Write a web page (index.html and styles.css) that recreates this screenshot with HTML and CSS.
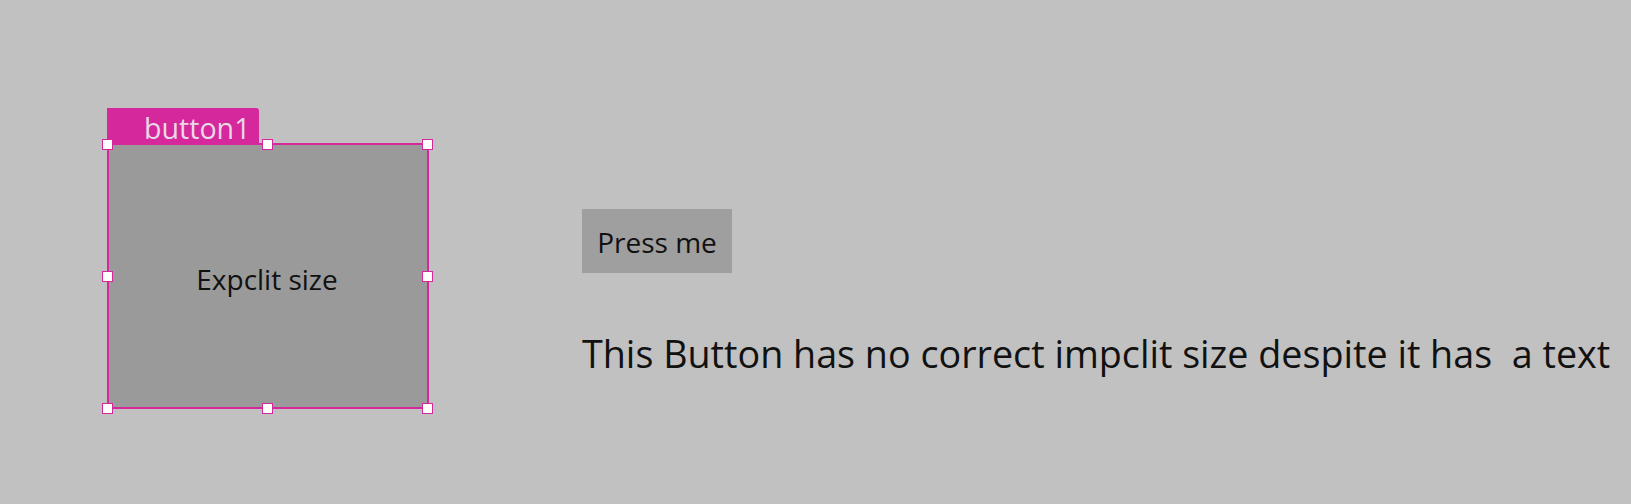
FILE: index.html
```html
<!DOCTYPE html>
<html>
<head>
<meta charset="utf-8">
<link rel="stylesheet" href="styles.css">
</head>
<body>
<div class="canvas">
  <div class="designer">
    <div class="tab"><span class="tab-label">button1</span></div>
    <div class="frame">
      <span class="frame-label">Expclit size</span>
      <span class="handle h-tl"></span>
      <span class="handle h-tm"></span>
      <span class="handle h-tr"></span>
      <span class="handle h-ml"></span>
      <span class="handle h-mr"></span>
      <span class="handle h-bl"></span>
      <span class="handle h-bm"></span>
      <span class="handle h-br"></span>
    </div>
  </div>
  <div class="stack">
    <div class="press">Press me</div>
    <div class="note">This Button has no correct impclit size despite it has&nbsp; a text</div>
  </div>
</div>
</body>
</html>
```

FILE: styles.css
```css
html, body {
  margin: 0;
  padding: 0;
  background: #c1c1c1;
  width: 1631px;
  height: 504px;
  overflow: hidden;
  font-family: "Open Sans", "Noto Sans", sans-serif;
}

.canvas {
  display: flex;
  align-items: flex-start;
  padding: 108px 0 0 107px;
}

.designer {
  width: 322px;
  display: flex;
  flex-direction: column;
}

.tab {
  width: 152px;
  height: 35px;
  box-sizing: border-box;
  background: #d5289c;
  border-radius: 0 3px 0 0;
  color: #ead8e6;
  display: flex;
  align-items: center;
  padding-left: 37px;
}

.tab-label {
  font-size: 28.6px;
  line-height: 1;
  padding-top: 5px;
  white-space: nowrap;
}

.frame {
  position: relative;
  width: 322px;
  height: 266px;
  box-sizing: border-box;
  border: 2px solid #d5289c;
  background: #9a9a9a;
  display: flex;
  align-items: center;
  justify-content: center;
}

.frame-label {
  font-size: 28px;
  color: #111;
  padding-top: 6px;
  padding-right: 2px;
}

.handle {
  position: absolute;
  width: 11px;
  height: 11px;
  box-sizing: border-box;
  background: #fff;
  border: 1px solid #d5289c;
}
.h-tl { left: -7px; top: -6px; }
.h-tm { left: calc(50% - 6px); top: -6px; }
.h-tr { right: -6px; top: -6px; }
.h-ml { left: -7px; top: calc(50% - 5px); }
.h-mr { right: -6px; top: calc(50% - 5px); }
.h-bl { left: -7px; bottom: -7px; }
.h-bm { left: calc(50% - 6px); bottom: -7px; }
.h-br { right: -6px; bottom: -7px; }

.stack {
  margin-left: 153px;
  padding-top: 101px;
  display: flex;
  flex-direction: column;
  align-items: flex-start;
}

.press {
  width: 150px;
  height: 64px;
  background: #9f9f9f;
  color: #111;
  font-size: 28px;
  display: flex;
  align-items: center;
  justify-content: center;
  padding-top: 2px;
  box-sizing: border-box;
}

.note {
  margin-top: 62px;
  margin-left: 0;
  font-size: 37.7px;
  line-height: 37.7px;
  color: #111;
  white-space: nowrap;
}
```
